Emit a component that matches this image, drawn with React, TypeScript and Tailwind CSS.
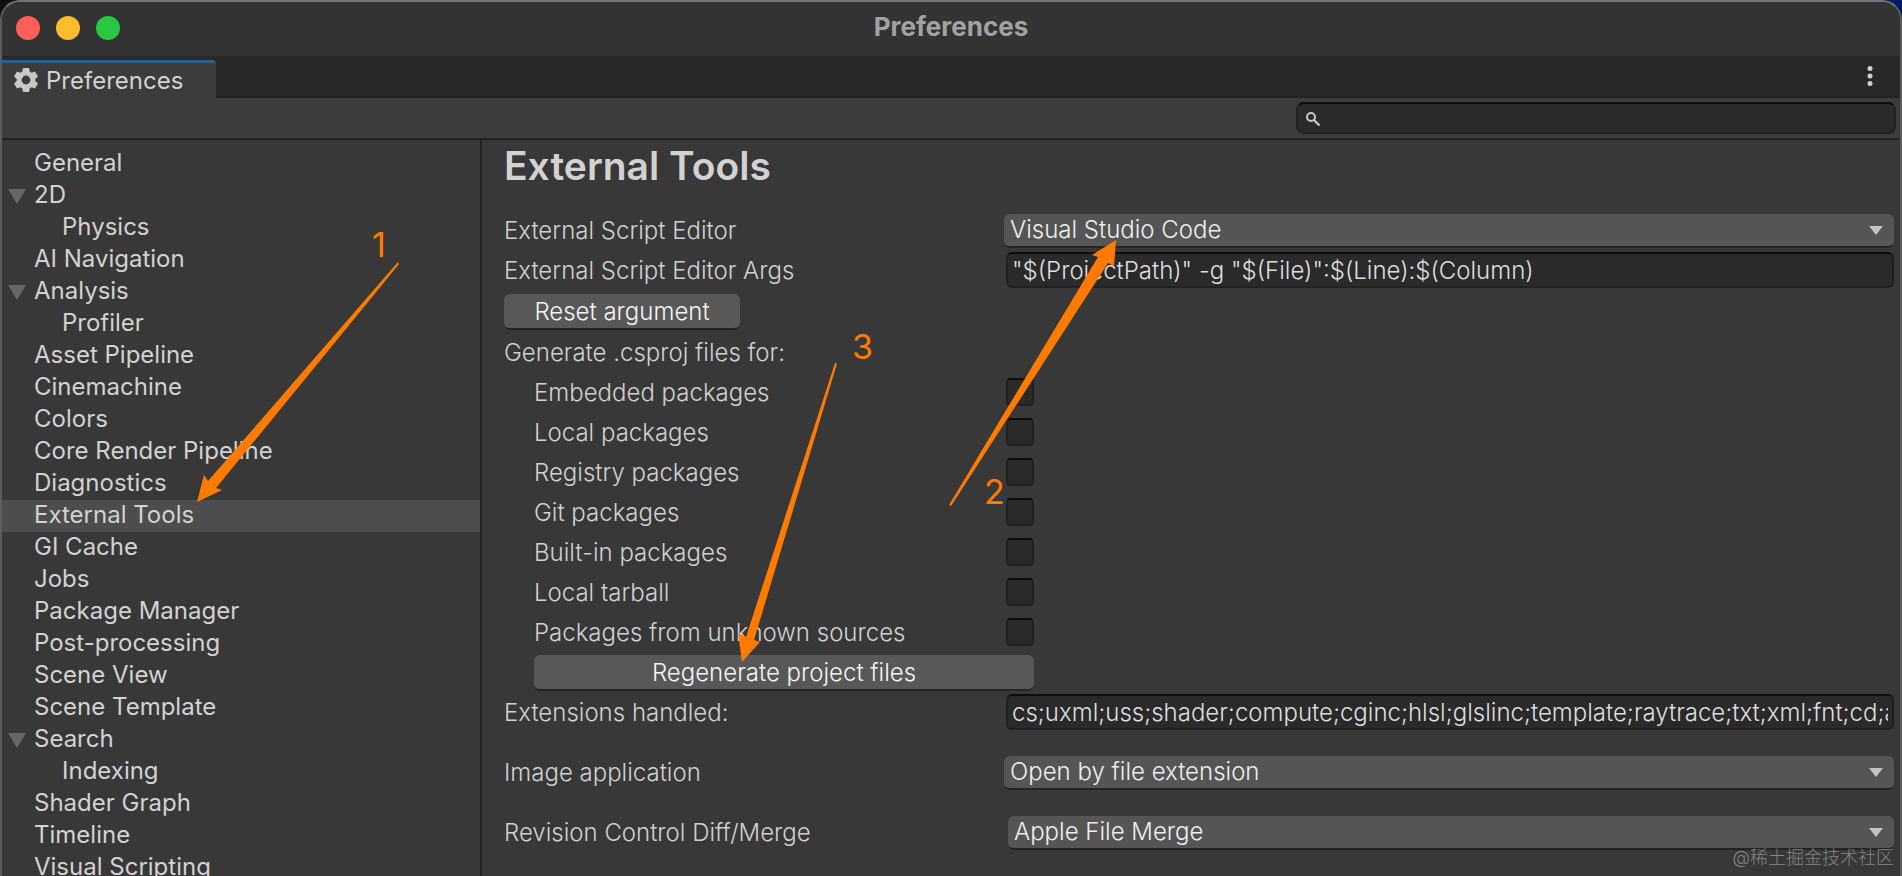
import React, { useState } from "react";
import { clsx } from "clsx";

type NavEntry = {
    label: string;
    child?: boolean;
    open?: boolean;
};

const NAV: NavEntry[] = [
    { label: "General" },
    { label: "2D", open: true },
    { label: "Physics", child: true },
    { label: "AI Navigation" },
    { label: "Analysis", open: true },
    { label: "Profiler", child: true },
    { label: "Asset Pipeline" },
    { label: "Cinemachine" },
    { label: "Colors" },
    { label: "Core Render Pipeline" },
    { label: "Diagnostics" },
    { label: "External Tools" },
    { label: "GI Cache" },
    { label: "Jobs" },
    { label: "Package Manager" },
    { label: "Post-processing" },
    { label: "Scene View" },
    { label: "Scene Template" },
    { label: "Search", open: true },
    { label: "Indexing", child: true },
    { label: "Shader Graph" },
    { label: "Timeline" },
    { label: "Visual Scripting" },
];

const PACKAGES = [
    "Embedded packages",
    "Local packages",
    "Registry packages",
    "Git packages",
    "Built-in packages",
    "Local tarball",
    "Packages from unknown sources",
];

const fieldClass =
    "block h-9 w-full rounded-md border-2 border-[#212121] border-t-[#0d0d0d] bg-[#2a2a2a] text-[#dedede] outline-none";

const buttonClass =
    "h-9 rounded-md border-b-2 border-[#242424] bg-[#585858] text-center leading-9 text-[#f4f4f4] hover:bg-[#676767]";

function TitleBar() {
    return (
        <header className="grid h-[54px] grid-cols-[1fr_auto_1fr] items-center bg-[#333333] px-[14px] pb-[2px]">
            <div className="flex gap-4">
                <button aria-label="Close" className="size-6 rounded-full bg-[#ff5f57]" />
                <button aria-label="Minimize" className="size-6 rounded-full bg-[#febc2e]" />
                <button aria-label="Zoom" className="size-6 rounded-full bg-[#28c840]" />
            </div>
            <h1 className="pb-[2px] text-[26px] leading-8 font-bold text-[#a2a2a2]">Preferences</h1>
        </header>
    );
}

function TabStrip() {
    return (
        <div className="flex h-[42px] items-end justify-between bg-[#282828]">
            <button className="flex h-[38px] w-[214px] items-center gap-2 rounded-tr-sm border-t-[3px] border-[#2c5d87] bg-[#3c3c3c] pb-[2px] pl-3 text-[#d2d2d2]">
                <svg viewBox="0 0 24 24" className="size-6 fill-[#c8c8c8]" aria-hidden="true">
                    <path
                        fillRule="evenodd"
                        d="M9 0h6l.7 3.6 1.9 1.1L21 3.400l3 5.200-2.700 2.400v2L24 15.400l-3 5.200-3.400-1.300-1.900 1.100L15 24H9l-.7-3.600-1.900-1.100L3 20.600l-3-5.200L2.700 13v-2L0 8.600l3-5.200 3.400 1.300 1.900-1.100zM12 7.600a4.400 4.400 0 1 0 0 8.800 4.400 4.400 0 0 0 0-8.800z"
                    />
                </svg>
                <span className="pt-[2px] leading-8">Preferences</span>
            </button>
            <button
                aria-label="More options"
                className="flex h-[42px] grow items-center justify-end border-b-2 border-[#232323] pr-[27px]"
            >
                <svg viewBox="0 0 6 20" className="h-5 w-[6px] fill-[#d0d0d0]">
                    <circle cx="3" cy="2.500" r="2.500" />
                    <circle cx="3" cy="10" r="2.500" />
                    <circle cx="3" cy="17.500" r="2.500" />
                </svg>
            </button>
        </div>
    );
}

function Toolbar() {
    return (
        <div className="flex h-[42px] justify-end border-b-2 border-[#232323] bg-[#3c3c3c] py-1 pr-1">
            <label className="flex w-[600px] items-center gap-2 rounded-lg border-2 border-[#212121] border-t-[#0d0d0d] bg-[#2a2a2a] px-2">
                <svg viewBox="0 0 14 14" className="mt-[2px] size-[14px]" fill="none" stroke="#c8c8c8" aria-hidden="true">
                    <circle cx="5" cy="5" r="4" strokeWidth="2" />
                    <path d="M8 8l5.500 5.500" strokeWidth="2.200" />
                </svg>
                <input aria-label="Search preferences" className="min-w-0 flex-1 bg-transparent text-[#d2d2d2] outline-none" />
            </label>
        </div>
    );
}

function Sidebar({ active, onSelect }: { active: string; onSelect: (label: string) => void }) {
    return (
        <nav className="w-[480px] shrink-0 border-r-2 border-[#232323] pt-2">
            {NAV.map((entry) => (
                <button
                    key={entry.label}
                    onClick={() => onSelect(entry.label)}
                    className={clsx(
                        "flex h-8 w-full items-center pb-[2px] text-left text-[#d2d2d2]",
                        entry.child ? "pl-15" : "pl-[6px]",
                        entry.label === active && "bg-[#4d4d4d]"
                    )}
                >
                    {!entry.child && (
                        <span className="flex w-[26px]">
                            {entry.open && (
                                <svg viewBox="0 0 18 15" className="mt-[2px] h-[15px] w-[18px] fill-[#676767]" aria-hidden="true">
                                    <path d="M0 0h18L9 15z" />
                                </svg>
                            )}
                        </span>
                    )}
                    <span className="leading-[30px]">{entry.label}</span>
                </button>
            ))}
        </nav>
    );
}

function Dropdown({ id, options, className }: { id: string; options: string[]; className?: string }) {
    return (
        <div className={clsx("relative mt-[2px]", className)}>
            <select
                id={id}
                className="block h-[34px] w-full appearance-none rounded-md border-b-2 border-[#242424] bg-[#555555] pr-10 pb-[2px] pl-[6px] text-[#eeeeee] outline-none"
            >
                {options.map((option) => (
                    <option key={option}>{option}</option>
                ))}
            </select>
            <svg
                viewBox="0 0 14 9"
                className="pointer-events-none absolute top-3 right-[11px] h-[9px] w-[14px] fill-[#c4c4c4]"
                aria-hidden="true"
            >
                <path d="M0 0h14L7 9z" />
            </svg>
        </div>
    );
}

function Row({ id, label, children }: { id: string; label: string; children: React.ReactNode }) {
    return (
        <div className="grid h-10 grid-cols-[500px_1fr] items-center">
            <label htmlFor={id} className="pt-[2px] leading-8">
                {label}
            </label>
            {children}
        </div>
    );
}

function ExternalTools() {
    return (
        <main className="min-w-0 flex-1 pr-[6px] pl-[22px] font-light text-[#d0d0d0]">
            <h2 className="mb-[18px] text-[39px] leading-[52px] font-semibold text-[#d2d2d2]">External Tools</h2>
            <Row id="editor" label="External Script Editor">
                <Dropdown id="editor" options={["Visual Studio Code", "Open by file extension"]} />
            </Row>
            <Row id="editor-args" label="External Script Editor Args">
                <div className="pl-[2px]">
                    <input
                        id="editor-args"
                        className={clsx(fieldClass, "px-1")}
                        defaultValue={'"$(ProjectPath)" -g "$(File)":$(Line):$(Column)'}
                    />
                </div>
            </Row>
            <div className="flex h-[42px] items-end pb-[2px]">
                <button className={clsx(buttonClass, "w-[236px]")}>Reset argument</button>
            </div>
            <fieldset>
                <legend className="h-10 leading-[42px]">Generate .csproj files for:</legend>
                <div className="pl-[30px]">
                    {PACKAGES.map((name) => (
                        <label key={name} className="grid h-10 grid-cols-[472px_1fr] items-center leading-8">
                            <span className="pt-[2px]">{name}</span>
                            <input
                                type="checkbox"
                                className="size-7 appearance-none rounded-sm border-2 border-[#212121] border-t-[#0d0d0d] bg-[#2a2a2a] checked:bg-[#c0c0c0]"
                            />
                        </label>
                    ))}
                    <div className="flex h-10 items-end pb-px">
                        <button className={clsx(buttonClass, "w-[500px]")}>Regenerate project files</button>
                    </div>
                </div>
            </fieldset>
            <Row id="extensions" label="Extensions handled:">
                <div className="pl-[2px]">
                    <input
                        id="extensions"
                        className={clsx(fieldClass, "px-1")}
                        defaultValue="cs;uxml;uss;shader;compute;cginc;hlsl;glslinc;template;raytrace;txt;xml;fnt;cd;asmdef;rsp;asmref"
                    />
                </div>
            </Row>
            <div className="mt-5 flex flex-col gap-5">
                <Row id="image-app" label="Image application">
                    <Dropdown id="image-app" options={["Open by file extension"]} />
                </Row>
                <Row id="diff-tool" label="Revision Control Diff/Merge">
                    <Dropdown id="diff-tool" options={["Apple File Merge"]} className="ml-1" />
                </Row>
            </div>
        </main>
    );
}

// Numbered arrows for the three setup steps
function Annotations() {
    return (
        <svg
            viewBox="0 0 1200 700"
            className="pointer-events-none absolute top-0 left-0 h-[700px] w-[1200px] fill-[#ff7b00] text-[34px]"
        >
            <path d="M398 262l1 2L216 488l6 2-25 12 7-27 4 6z" />
            <path d="M949 505l149-248-6-2 24-15-2 26-6-3L951 506z" />
            <path d="M835 363l2 .5L754 640l6 2-18 20-4-29 8 4z" />
            <text x="372" y="257">1</text>
            <text x="984" y="504">2</text>
            <text x="852" y="359">3</text>
        </svg>
    );
}

export default function App() {
    const [active, setActive] = useState("External Tools");

    return (
        <div className="h-screen overflow-hidden bg-linear-to-r from-[#101010] from-50% to-[#001a66] to-50% font-['Inter','Noto_Sans_CJK_SC',sans-serif] text-2xl">
            <div className="relative flex h-full flex-col overflow-hidden rounded-t-[20px] border-2 border-b-0 border-[#5c5c5c] border-t-[#747474] bg-[#383838]">
                <TitleBar />
                <TabStrip />
                <Toolbar />
                <div className="flex min-h-0 flex-1">
                    <Sidebar active={active} onSelect={setActive} />
                    <ExternalTools />
                </div>
            </div>
            <Annotations />
            <p className="pointer-events-none absolute right-2 bottom-1 text-lg leading-7 font-light text-[#858585]">
                @稀土掘金技术社区
            </p>
        </div>
    );
}
